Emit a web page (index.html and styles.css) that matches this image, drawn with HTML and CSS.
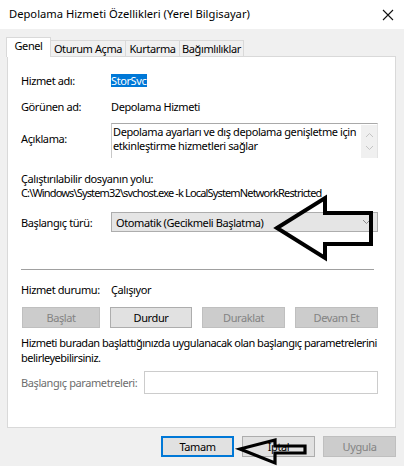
FILE: index.html
```html
<!DOCTYPE html>
<html lang="tr">
<head>
<meta charset="utf-8">
<title>Depolama Hizmeti Özellikleri</title>
<link rel="stylesheet" href="styles.css">
</head>
<body>
<div class="window">
  <div class="titlebar">
    <span class="title">Depolama Hizmeti Özellikleri (Yerel Bilgisayar)</span>
    <svg class="close" width="12" height="12" viewBox="0 0 12 12"><path d="M1 1L11 11M11 1L1 11" stroke="#111" stroke-width="1.1" fill="none"/></svg>
  </div>
  <div class="body">
    <div class="tabs">
      <div class="tab active">Genel</div>
      <div class="tab t2">Oturum Açma</div>
      <div class="tab t3">Kurtarma</div>
      <div class="tab t4">Bağımlılıklar</div>
    </div>
    <div class="panel">
      <div class="row r1"><span class="label">Hizmet adı:</span><span class="sel">StorSvc</span></div>
      <div class="row r2"><span class="label">Görünen ad:</span><span class="value">Depolama Hizmeti</span></div>
      <div class="row r3"><span class="label lbl-desc">Açıklama:</span>
        <div class="textbox">
          <div class="tb-text">Depolama ayarları ve dış depolama genişletme için etkinleştirme hizmetleri sağlar</div>
          <div class="scroll">
            <svg width="9" height="6" viewBox="0 0 9 6"><path d="M1 5L4.5 1.5L8 5" stroke="#c4c4c4" stroke-width="1" fill="none"/></svg>
            <svg width="9" height="6" viewBox="0 0 9 6"><path d="M1 1L4.5 4.5L8 1" stroke="#c4c4c4" stroke-width="1" fill="none"/></svg>
          </div>
        </div>
      </div>
      <div class="plain p1">Çalıştırılabilir dosyanın yolu:</div>
      <div class="plain p2">C:\Windows\System32\svchost.exe -k LocalSystemNetworkRestricted</div>
      <div class="row r4"><span class="label">Başlangıç türü:</span>
        <div class="combo"><span>Otomatik (Gecikmeli Başlatma)</span>
          <svg width="9" height="6" viewBox="0 0 9 6"><path d="M1 1L4.5 4.5L8 1" stroke="#8a8a8a" stroke-width="1" fill="none"/></svg>
        </div>
      </div>
      <div class="sep"></div>
      <div class="row r5"><span class="label">Hizmet durumu:</span><span class="value">Çalışıyor</span></div>
      <div class="btnrow">
        <div class="btn disabled">Başlat</div>
        <div class="btn">Durdur</div>
        <div class="btn disabled">Duraklat</div>
        <div class="btn disabled">Devam Et</div>
      </div>
      <div class="para">Hizmeti buradan başlattığınızda uygulanacak olan başlangıç parametrelerini belirleyebilirsiniz.</div>
      <div class="params"><span class="glabel">Başlangıç parametreleri:</span><div class="input"></div></div>
    </div>
    <div class="footer">
      <div class="btn fbtn default">Tamam</div>
      <div class="btn fbtn">İptal</div>
      <div class="btn fbtn disabled">Uygula</div>
    </div>
  </div>
  <svg class="arrow arrow1" width="404" height="466" viewBox="0 0 404 466">
    <polygon points="277,228 325,198 325,213 371,213 371,244 325,244 325,258" fill="none" stroke="#000" stroke-width="4" stroke-linejoin="miter"/>
  </svg>
  <svg class="arrow arrow2" width="404" height="466" viewBox="0 0 404 466">
    <polygon points="240,449 275,440 275,446 305,446 305,453 275,453 275,463" fill="none" stroke="#000" stroke-width="3.2" stroke-linejoin="miter"/>
  </svg>
</div>
</body>
</html>
```

FILE: styles.css
```css
* { box-sizing: border-box; }
html, body { margin: 0; padding: 0; }
body {
  width: 404px;
  height: 466px;
  overflow: hidden;
  font-family: "Noto Sans", "Liberation Sans", sans-serif;
  font-size: 11px;
  letter-spacing: -0.4px;
  color: #000;
  background: #f0f0f0;
  white-space: nowrap;
}
.window {
  position: relative;
  width: 404px;
  height: 466px;
  background: #f0f0f0;
}
.titlebar {
  height: 29px;
  background: #fff;
  display: flex;
  align-items: center;
  justify-content: space-between;
  padding: 0 10px 2px 9px;
}
.title { font-size: 11.2px; letter-spacing: 0; }
.close { margin-top: 2px; }
.body {
  padding: 8px 8px 0 7px;
}
.tabs {
  display: flex;
  align-items: flex-end;
  height: 19px;
  position: relative;
  z-index: 1;
}
.tab {
  height: 16px;
  border: 1px solid #d9d9d9;
  border-bottom: none;
  background: #f0f0f0;
  display: flex;
  align-items: center;
  justify-content: center;
  margin-left: -1px;
  line-height: 14px;
}
.tab.active {
  height: 20px;
  margin-bottom: -1px;
  background: #fff;
  width: 45px;
  margin-left: -1px;
  padding-bottom: 3px;
}
.t2 { width: 76px; }
.t3 { width: 55px; }
.t4 { width: 65px; }
.panel {
  background: #fff;
  border: 1px solid #d9d9d9;
  height: 372px;
  padding: 0 0 0 13px;
  display: flex;
  flex-direction: column;
  align-items: flex-start;
}
.row { display: flex; align-items: center; }
.label { width: 90px; flex: none; }
.r1 { margin-top: 16px; height: 15px; }
.sel {
  background: #0078d7;
  color: #fff;
  height: 13px;
  line-height: 13px;
  padding: 0 1px 0 0;
}
.r2 { margin-top: 11px; height: 15px; }
.r3 { margin-top: 9px; height: 35px; align-items: flex-start; }
.lbl-desc { margin-top: 8px; }
.textbox {
  width: 267px;
  height: 35px;
  border-top: 1px solid #a9a9a9;
  border-left: 1px solid #c8c8c8;
  border-right: 1px solid #e3e3e3;
  display: flex;
  justify-content: space-between;
}
.tb-text {
  width: 245px;
  line-height: 14px;
  padding: 1px 0 0 1px;
  white-space: normal;
}
.scroll {
  width: 16px;
  height: 33px;
  margin-top: 1px;
  background: #f0f0f0;
  display: flex;
  flex-direction: column;
  align-items: center;
  justify-content: space-around;
  padding: 4px 0;
}
.plain { height: 14px; line-height: 14px; }
.p1 { margin-top: 14px; }
.p2 { margin-top: 0; letter-spacing: -0.85px; }
.r4 { margin-top: 12px; height: 20px; }
.combo {
  width: 267px;
  height: 20px;
  background: #e5e5e5;
  border: 1px solid #adadad;
  display: flex;
  align-items: center;
  justify-content: space-between;
  padding: 0 6px 0 4px;
}
.sep {
  margin-top: 37px;
  width: 353px;
  height: 1px;
  background: #a0a0a0;
}
.r5 { margin-top: 12px; height: 15px; }
.btnrow {
  margin-top: 10px;
  margin-left: 1px;
  width: 355px;
  display: grid;
  grid-template-columns: 78px 82px 83px 83px;
  column-gap: 10px;
}
.btn {
  height: 21px;
  border: 1px solid #adadad;
  background: #e1e1e1;
  display: flex;
  align-items: center;
  justify-content: center;
}
.btn.disabled {
  background: #cccccc;
  border-color: #bfbfbf;
  color: #838383;
}
.para {
  margin-top: 7px;
  line-height: 15px;
  width: 365px;
  white-space: normal;
  letter-spacing: -0.5px;
}
.params {
  margin-top: 6px;
  height: 23px;
  display: grid;
  grid-template-columns: 123px 234px;
  align-items: center;
  justify-items: start;
}
.glabel { color: #6d6d6d; }
.input {
  width: 234px;
  height: 23px;
  border: 1px solid #cccccc;
  background: #fff;
}
.footer {
  display: flex;
  justify-content: flex-end;
  gap: 8px;
  margin-top: 8px;
}
.fbtn { width: 73px; height: 21px; }
.fbtn.default { border: 2px solid #0078d7; }
.arrow {
  position: absolute;
  left: 0;
  top: 0;
  pointer-events: none;
}
```
